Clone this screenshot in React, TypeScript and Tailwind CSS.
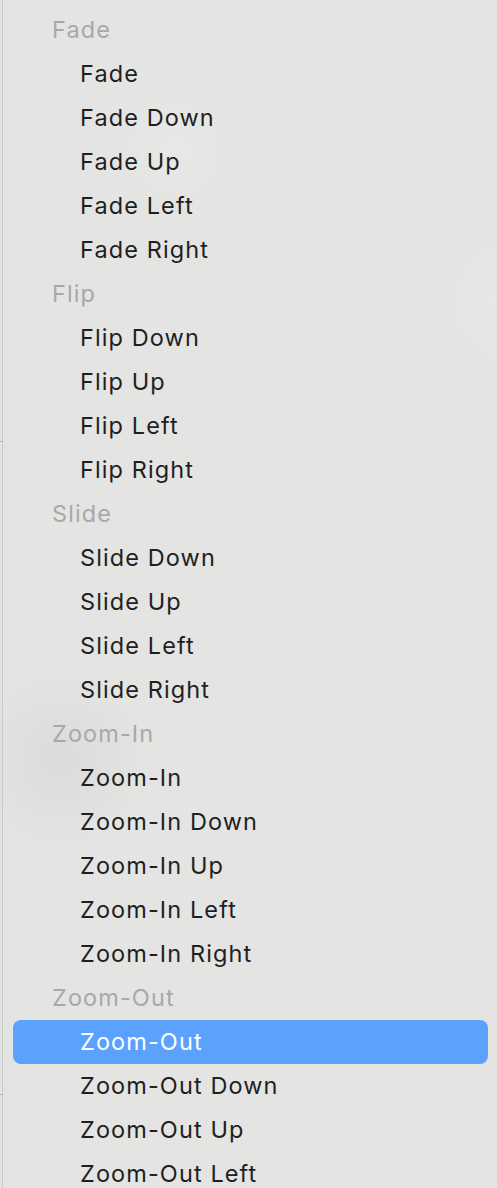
import React from "react";

const groups = [
  { title: "Fade", items: ["Fade", "Fade Down", "Fade Up", "Fade Left", "Fade Right"] },
  { title: "Flip", items: ["Flip Down", "Flip Up", "Flip Left", "Flip Right"] },
  { title: "Slide", items: ["Slide Down", "Slide Up", "Slide Left", "Slide Right"] },
  { title: "Zoom-In", items: ["Zoom-In", "Zoom-In Down", "Zoom-In Up", "Zoom-In Left", "Zoom-In Right"] },
  { title: "Zoom-Out", items: ["Zoom-Out", "Zoom-Out Down", "Zoom-Out Up", "Zoom-Out Left"] },
];

const selected = "Zoom-Out";

export default function App() {
  return (
    <div className="relative h-[1188px] w-[497px] overflow-hidden bg-[#e4e4e3] font-['Inter','Liberation_Sans',sans-serif] text-[23.5px] tracking-[1.1px]">
      {/* soft blurred blobs behind the menu */}
      <div className="pointer-events-none absolute inset-0 bg-[radial-gradient(circle_at_175px_150px,#e8e8e7_0px,transparent_60px),radial-gradient(circle_at_515px_300px,#e8e8e7_0px,#e6e6e5_45px,transparent_75px),radial-gradient(circle_at_60px_760px,#dbdbda_0px,transparent_90px)]" />
      {/* left border */}
      <div className="absolute left-[2px] top-0 h-full w-[1px] bg-[#c9c9c8]" />
      <div className="absolute left-0 top-[441px] h-[1px] w-[3px] bg-[#b5b5b5]" />
      <div className="absolute left-0 top-[1094px] h-[1px] w-[3px] bg-[#b5b5b5]" />

      <div className="relative pt-[8px] pl-[13px] pr-[9px]">
        {groups.map((g) => (
          <div key={g.title}>
            <div className="flex h-[44px] items-center pl-[39px] text-[#a8a8a8]">{g.title}</div>
            {g.items.map((it) => (
              <div
                key={it}
                className={
                  it === selected
                    ? "flex h-[44px] items-center rounded-[8px] bg-[#5aa2fe] pl-[67px] text-white"
                    : "flex h-[44px] items-center pl-[67px] text-[#1f1f1f]"
                }
              >
                {it}
              </div>
            ))}
          </div>
        ))}
      </div>
    </div>
  );
}
